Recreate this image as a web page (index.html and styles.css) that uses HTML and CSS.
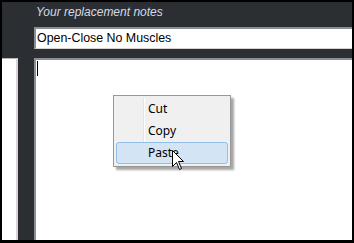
FILE: index.html
```html
<!DOCTYPE html>
<html lang="en">
<head>
    <meta charset="UTF-8">
    <meta name="viewport" content="width=device-width, initial-scale=1.0">
    <title>Replacement Notes</title>
    <link rel="stylesheet" href="styles.css">
</head>
<body>
    <div class="frame">
        <!-- Painel lateral -->
        <div class="side">
            <div class="side-panel"></div>
        </div>

        <!-- Notas -->
        <div class="main">
            <div class="notes-title">Your replacement notes</div>
            <div class="name-field">Open-Close No Muscles</div>
            <div class="notes-area"><span class="caret"></span></div>
        </div>

        <!-- Menu de contexto -->
        <ul class="context-menu">
            <li class="menu-item">Cut</li>
            <li class="menu-item">Copy</li>
            <li class="menu-item active">Paste</li>
        </ul>

        <svg class="pointer" width="13" height="21" viewBox="0 0 13 21">
            <path d="M0.5 0.5 L0.5 16.5 L4.5 12.5 L7.5 19.5 L9.5 18.5 L6.5 11.5 L11.5 11.5 Z" fill="#fff" stroke="#000" stroke-width="1" stroke-linejoin="miter"/>
        </svg>
    </div>
</body>
</html>
```

FILE: styles.css
```css
body {
    margin: 0;
    background-color: #000;
}
.frame {
    position: relative;
    width: 354px;
    height: 243px;
    box-sizing: border-box;
    border-style: solid;
    border-color: #000;
    border-width: 2px 2px 3px 2px;
    background-color: #2b2f34;
    display: grid;
    grid-template-columns: 32px 1fr;
    overflow: hidden;
}
.side {
    display: flex;
    flex-direction: column;
    padding-top: 56px;
}
.side-panel {
    flex: 1;
    width: 14px;
    background-color: #fff;
    border-top: 1px solid #b4b4b4;
    border-right: 2px solid #d9d3d5;
}
.main {
    display: flex;
    flex-direction: column;
    min-width: 0;
}
.notes-title {
    height: 25px;
    box-sizing: border-box;
    padding: 3px 0 0 2px;
    line-height: 14px;
    font-family: "Liberation Sans", Arial, sans-serif;
    font-size: 12px;
    font-style: italic;
    color: #d6dbe4;
}
.name-field {
    height: 22px;
    box-sizing: border-box;
    background-color: #fff;
    border-top: 2px solid #8b8f93;
    border-left: 2px solid #8b8f93;
    border-bottom: 1px solid #d4d4d4;
    padding-left: 1px;
    line-height: 19px;
    font-family: "Liberation Sans", Arial, sans-serif;
    font-size: 12.4px;
    color: #000;
    white-space: nowrap;
}
.notes-area {
    flex: 1;
    margin-top: 9px;
    background-color: #fff;
    border-top: 2px solid #8b8f93;
    border-left: 2px solid #8b8f93;
}
.caret {
    display: block;
    width: 1px;
    height: 15px;
    margin: 1px 0 0 1px;
    background-color: #000;
}
.context-menu {
    position: absolute;
    left: 111px;
    top: 93px;
    width: 112px;
    margin: 0;
    padding: 2px;
    list-style: none;
    background-color: #f0f0f0;
    border: 1px solid #979797;
    box-shadow: 3px 3px 2px rgba(0,0,0,0.35);
    font-family: "Noto Sans", "Open Sans", sans-serif;
    font-size: 12px;
    color: #000;
}
.context-menu::before {
    content: "";
    position: absolute;
    left: 29px;
    top: 2px;
    bottom: 2px;
    width: 1px;
    background-color: #e2e3e3;
    border-right: 1px solid #fff;
}
.menu-item {
    position: relative;
    height: 22px;
    box-sizing: border-box;
    line-height: 20px;
    padding-left: 31px;
    border: 1px solid transparent;
    border-radius: 3px;
}
.menu-item.active {
    background-color: #d3e4f5;
    border-color: #92bfec;
}
.pointer {
    position: absolute;
    left: 170px;
    top: 148px;
}
```
